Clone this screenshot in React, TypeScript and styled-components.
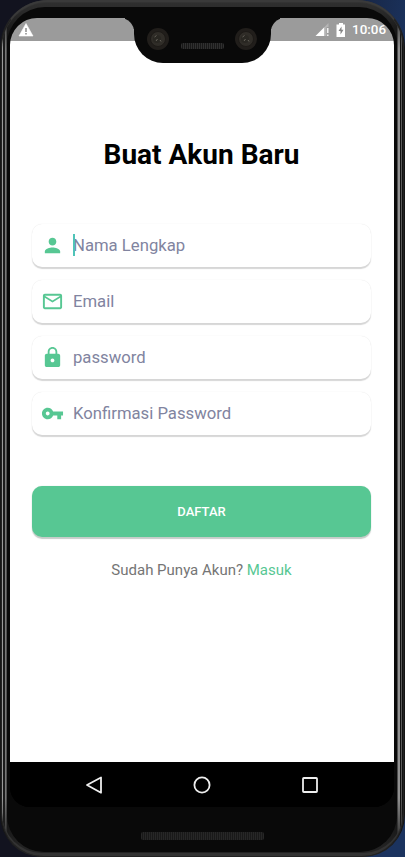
import React from "react";
import styled, { createGlobalStyle, css } from "styled-components";

const Global = createGlobalStyle`
  * { box-sizing: border-box; }
  body { margin: 0; font-family: Roboto, sans-serif; background: #141b2e; }
`;

const Desktop = styled.div`
  width: 405px;
  height: 857px;
  overflow: hidden;
  background: linear-gradient(100deg, #12131f 0 50%, #1b335f 75%);
`;

const Shell = styled.div`
  height: 857px;
  padding: 0 1px;
  border-radius: 48px 48px 42px 42px;
  background: linear-gradient(#343434, #343434 7px, #151515 40px, #151515 830px, #262626);
`;

const Rim = styled.div`
  height: 100%;
  padding: 1px 0 3px;
  border-radius: 47px 47px 42px 42px;
  background: #333;
  border: 1px solid #222;
  border-top: 2px solid #3a3a3a;
  border-bottom-color: #222;
`;

const Chrome = styled.div`
  height: 100%;
  padding: 4px 6px 1px 5px;
  border-radius: 45px 45px 40px 40px;
  background: linear-gradient(#2f2f2f 0, #2a2a2a 8px, transparent 46px, transparent 795px, #222 842px),
    linear-gradient(90deg, #999 0 1px, #1b1b1b 1px 3px, #777 3px 4px, #505050 4px 5px, #0a0a0a 5px 395px, #4c4c4c 395px 396px, #909090 396px 398px, #111 398px 399px, #5a5a5a 399px 400px, #111 400px);
`;

const Bezel = styled.div`
  height: 100%;
  padding: 11px 3px 0;
  border-radius: 38px 38px 37px 37px;
  background: #090909;
  display: flex;
  flex-direction: column;
  align-items: center;
`;

const Screen = styled.main`
  width: 384px;
  height: 789px;
  flex: none;
  border-radius: 27px 27px 20px 20px;
  overflow: hidden;
  background: #000;
  display: flex;
  flex-direction: column;
`;

const StatusBar = styled.header`
  height: 23px;
  flex: none;
  background: #9b9b9b;
  display: flex;
  justify-content: space-between;
  padding: 0 8px;
  color: #fff;
`;

const StatusGroup = styled.div`
  display: flex;
  align-items: center;
  gap: 6px;
`;

const Clock = styled.time`
  font-size: 13.4px;
  font-weight: 500;
  line-height: 25px;
`;

const Notch = styled.div`
  position: absolute;
  left: 134px;
  top: 12px;
  width: 137px;
  height: 51px;
  background: #090909;
  border-radius: 0 0 29px 29px;
  display: flex;
  align-items: center;
  justify-content: space-between;
  padding: 2px 13px 0 12px;
  &::before, &::after {
    content: "";
    position: absolute;
    top: 6px;
    width: 14px;
    height: 16px;
    clip-path: inset(0);
  }
  &::before { right: 100%; border-top-right-radius: 14px; box-shadow: 5px -5px 0 #090909; }
  &::after { left: 100%; border-top-left-radius: 14px; box-shadow: -5px -5px 0 #090909; }
`;

const Grille = styled.div<{ $w: number; $h: number; $c: string }>`
  width: ${p => p.$w}px;
  height: ${p => p.$h}px;
  border-radius: 2px;
  background: repeating-linear-gradient(90deg, ${p => p.$c} 0 1px, #191919 1px 2px);
`;

const SlotGrille = styled(Grille)`
  margin-top: 14px;
`;

const Form = styled.form`
  flex: 1;
  display: flex;
  flex-direction: column;
  padding: 97px 23px 0 22px;
  background: #fff;
`;

const Title = styled.h1`
  margin: 0 0 52px;
  font-size: 28px;
  line-height: 34px;
  font-weight: 700;
  text-align: center;
  color: #000;
  white-space: nowrap;
`;

const Fields = styled.div`
  display: flex;
  flex-direction: column;
  gap: 13px;
`;

const Field = styled.label`
  height: 43px;
  border-radius: 10px;
  background: #fff;
  display: flex;
  align-items: center;
  gap: 9px;
  padding-left: 9px;
  box-shadow: 0 2px 1px #d6d6d6, 0 0 1px #ddd;
`;

const Placeholder = styled.span<{ $focused?: boolean }>`
  font-size: 16.7px;
  line-height: 22px;
  padding-top: 1px;
  color: #8184a0;
  position: relative;
  ${p => p.$focused && css`
    &::before {
      content: "";
      position: absolute;
      left: 0;
      top: 0;
      width: 2px;
      height: 22px;
      background: #4fc4b8;
    }
  `}
`;

const Submit = styled.button`
  height: 51px;
  margin-top: 51px;
  border: 0;
  border-radius: 10px;
  background: #57c793;
  color: #fff;
  font: 500 13px Roboto, sans-serif;
  box-shadow: 0 1.5px 1px #c5ccc8, 0 0 1px #b8d8c8;
`;

const Footer = styled.p`
  margin: 23px 0 0;
  text-align: center;
  font-size: 15px;
  line-height: 20px;
  color: #757575;
`;

const Link = styled.span`
  color: #57c793;
`;

const NavBar = styled.nav`
  height: 45px;
  flex: none;
  background: #000;
  display: flex;
  align-items: center;
  justify-content: center;
  gap: 84px;
`;

const Speaker = styled.div`
  margin-top: 25px;
`;

const G = "#57c793";

const icons = {
  person: "M12 12c2.21 0 4-1.79 4-4s-1.79-4-4-4-4 1.79-4 4 1.79 4 4 4zm0 2c-2.67 0-8 1.34-8 4v2h16v-2c0-2.66-5.33-4-8-4z",
  mail: "M22 6c0-1.1-.9-2-2-2H4c-1.1 0-2 .9-2 2v12c0 1.1.9 2 2 2h16c1.1 0 2-.9 2-2V6zm-2 0-8 5-8-5h16zm0 12H4V8l8 5 8-5v10z",
  lock: "M18 8h-1V6c0-2.76-2.24-5-5-5S7 3.24 7 6v2H6c-1.1 0-2 .9-2 2v10c0 1.1.9 2 2 2h12c1.1 0 2-.9 2-2V10c0-1.1-.9-2-2-2zm-6 9c-1.1 0-2-.9-2-2s.9-2 2-2 2 .9 2 2-.9 2-2 2zm3.1-9H8.9V6c0-1.71 1.39-3.1 3.1-3.1s3.1 1.39 3.1 3.1v2z",
  key: "M12.65 10C11.83 7.67 9.61 6 7 6c-3.31 0-6 2.69-6 6s2.69 6 6 6c2.61 0 4.83-1.67 5.65-4H17v4h4v-4h2v-4H12.65zM7 14c-1.1 0-2-.9-2-2s.9-2 2-2 2 .9 2 2-.9 2-2 2z",
};

const fields: { icon: keyof typeof icons; label: string; focused?: boolean }[] = [
  { icon: "person", label: "Nama Lengkap", focused: true },
  { icon: "mail", label: "Email" },
  { icon: "lock", label: "password" },
  { icon: "key", label: "Konfirmasi Password" },
];

const Camera = () => (
  <svg width="24" height="24" viewBox="0 0 24 24">
    <circle cx="12" cy="12" r="11" fill="#211e1b" />
    <circle cx="12" cy="12" r="7.5" fill="#302d28" stroke="#1d1a17" />
    <circle cx="11" cy="12" r="4" fill="#292722" />
    <path d="M8.5 10l2-1.5M10 14l1.5-2M14 13l1 1.5" stroke="#68645c" strokeWidth="1" />
  </svg>
);

export default function App() {
  return (
    <Desktop>
      <Global />
      <Shell><Rim><Chrome><Bezel>
        <Screen>
          <StatusBar>
            <StatusGroup>
              <svg width="16" height="14" viewBox="0 0 16 14">
                <path d="M8 .5 15 13H1z" fill="#fff" stroke="#fff" strokeWidth=".6" strokeLinejoin="round" />
                <path d="M8 5v4M8 10v1.6" stroke="#8b8b8b" strokeWidth="1.5" />
              </svg>
            </StatusGroup>
            <StatusGroup>
              <svg width="15" height="14" viewBox="0 0 15 14">
                <path d="M.5 13 9.5 4v9z" fill="#fff" />
                <path d="M9.5 4 13.5 0v4h-2v9h-2z" fill="#b5b5b5" />
                <path d="M12.8 5v5M12.8 11.5V13" stroke="#fff" strokeWidth="1.3" />
              </svg>
              <svg width="10" height="14" viewBox="0 0 10 14">
                <path d="M3 0h4v1.5h2V14H.5V1.5H3z" fill="#fff" />
                <path d="M5.5 3.5 2.5 8h2v3.5l3-4.7H5.5z" fill="#858585" />
              </svg>
              <Clock>10:06</Clock>
            </StatusGroup>
          </StatusBar>
          <Form>
            <Title>Buat Akun Baru</Title>
            <Fields>
              {fields.map(f => (
                <Field key={f.icon}>
                  <svg width="23" height="23" viewBox="0 0 24 24" fill={G}><path d={icons[f.icon]} /></svg>
                  <Placeholder $focused={f.focused}>{f.label}</Placeholder>
                </Field>
              ))}
            </Fields>
            <Submit type="button">DAFTAR</Submit>
            <Footer>Sudah Punya Akun? <Link>Masuk</Link></Footer>
          </Form>
          <NavBar>
            <svg width="24" height="24" viewBox="0 0 24 24" fill="none" stroke="#eee" strokeWidth="1.8"><path d="M19 4.5v15.2L5 12z" strokeLinejoin="round" /></svg>
            <svg width="24" height="24" viewBox="0 0 24 24" fill="none" stroke="#eee" strokeWidth="1.8"><circle cx="12" cy="12" r="7.6" /></svg>
            <svg width="24" height="24" viewBox="0 0 24 24" fill="none" stroke="#eee" strokeWidth="1.8"><rect x="5" y="5" width="14" height="14" rx=".8" /></svg>
          </NavBar>
        </Screen>
        <Speaker><Grille $w={123} $h={8} $c="#272727" /></Speaker>
      </Bezel></Chrome></Rim></Shell>
      <Notch>
        <Camera />
        <SlotGrille $w={43} $h={6} $c="#303030" />
        <Camera />
      </Notch>
    </Desktop>
  );
}
